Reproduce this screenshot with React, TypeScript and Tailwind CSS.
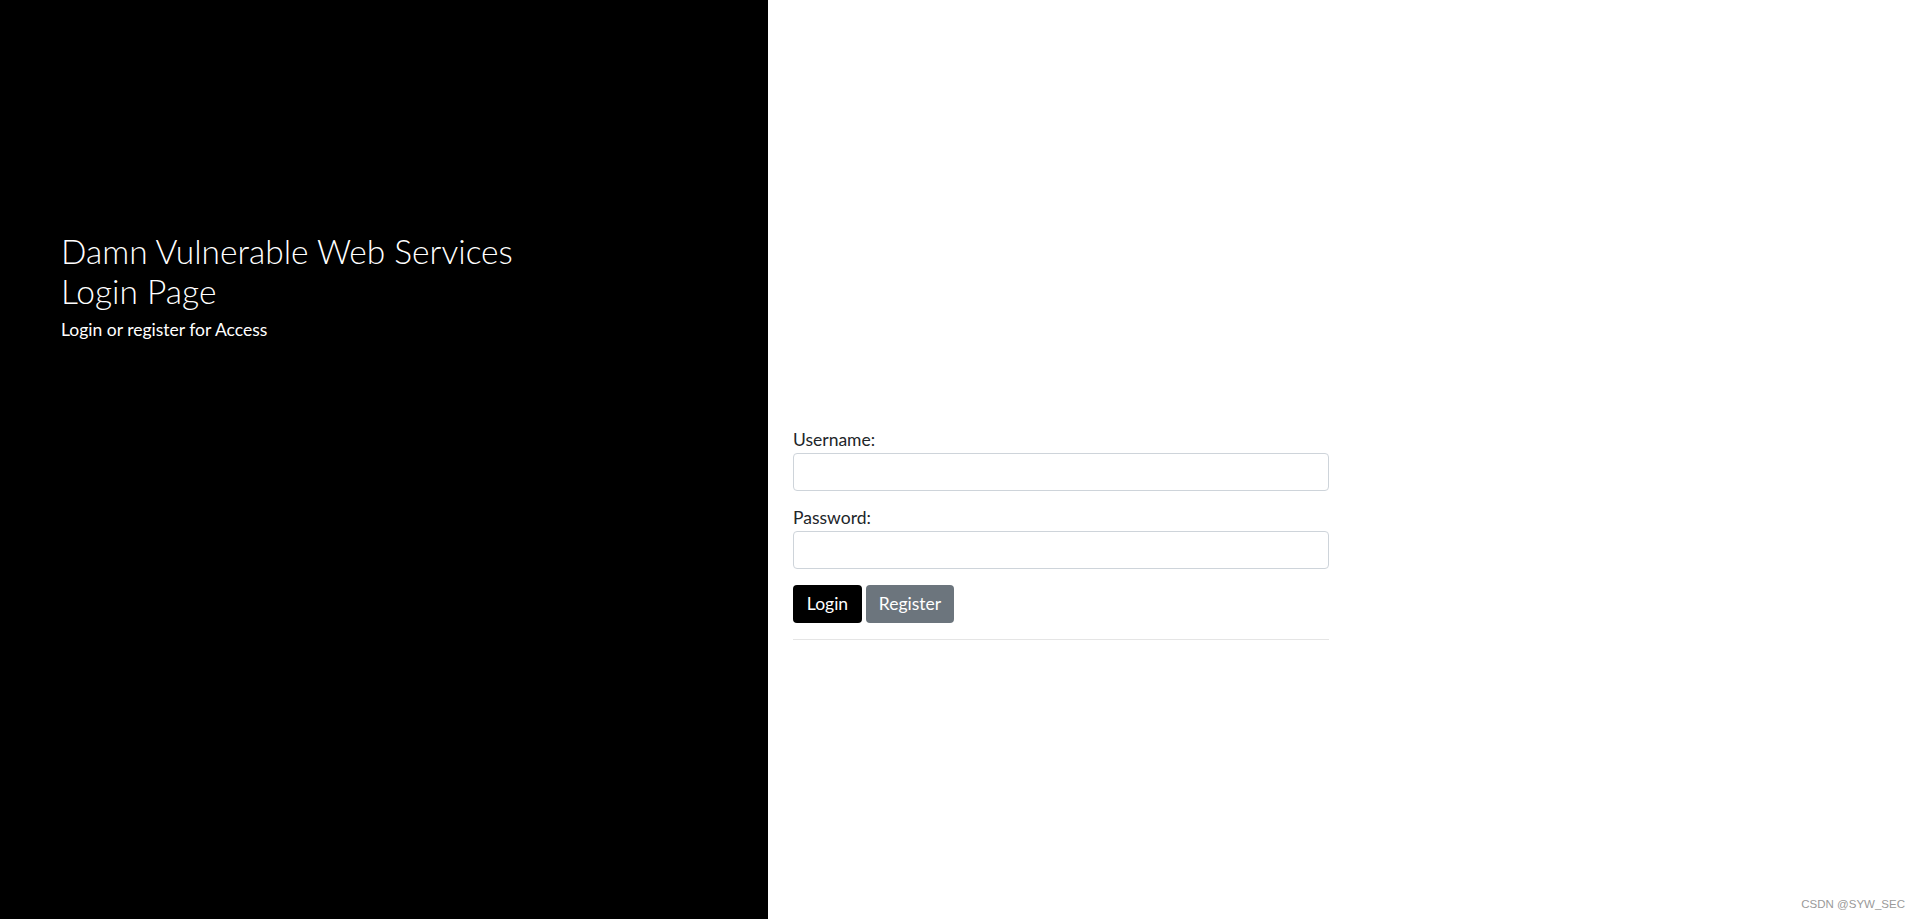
import React from 'react';

export default function App() {
  return (
    <div className="flex h-[919px] w-full font-['Lato',sans-serif]">
      {/* left hero */}
      <div className="w-[768px] shrink-0 bg-black pl-[61px] pt-[231px] text-white">
        <h1 className="text-[33.5px] font-light leading-[40px]">
          Damn Vulnerable Web Services
          <br />
          Login Page
        </h1>
        <p className="mt-[8px] text-[17.5px] leading-[22px]">Login or register for Access</p>
      </div>

      {/* login form */}
      <div className="relative flex-1 bg-white pl-[25px] pt-[429px] text-[#212529]">
        <form className="w-[536px]" onSubmit={(e) => e.preventDefault()}>
          <label className="block text-[17.5px] leading-[22px]">Username:</label>
          <input
            type="text"
            className="mt-[2px] block h-[38px] w-full rounded-[4px] border border-[#ced4da] px-3 outline-none"
          />
          <label className="mt-[16px] block text-[17.5px] leading-[22px]">Password:</label>
          <input
            type="password"
            className="mt-[2px] block h-[38px] w-full rounded-[4px] border border-[#ced4da] px-3 outline-none"
          />
          <div className="mt-[16px] flex gap-[4px]">
            <button className="h-[38px] w-[69px] rounded-[4px] bg-black text-[17.5px] text-white">Login</button>
            <button className="h-[38px] w-[88px] rounded-[4px] bg-[#6c757d] text-[17.5px] text-white">Register</button>
          </div>
          <hr className="mt-[16px] border-t border-[#e5e5e5]" />
        </form>
        <span className="absolute bottom-[6px] right-[15px] font-['Liberation_Sans',sans-serif] text-[11.5px] text-[#9a9a9a]">
          CSDN @SYW_SEC
        </span>
      </div>
    </div>
  );
}
